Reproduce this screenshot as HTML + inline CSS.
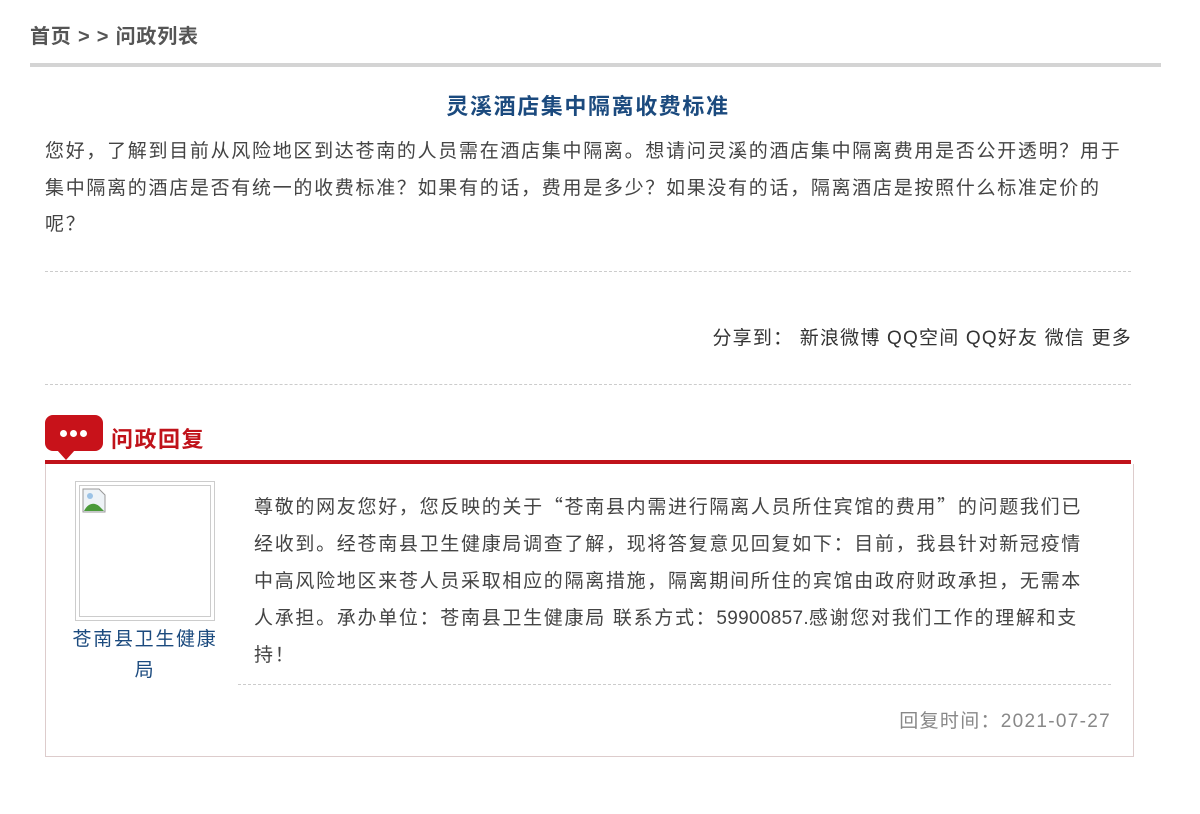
<!DOCTYPE html>
<html><head><meta charset="utf-8"><style>
body{margin:0;background:#fff;font-family:"Liberation Sans","Noto Sans CJK SC",sans-serif;}
.cj{font-family:"Noto Sans CJK SC",sans-serif;}
.crumb{position:absolute;left:30px;top:20px;font-size:20px;font-weight:bold;color:#555;letter-spacing:0.8px;}
.bar{position:absolute;left:30px;top:63px;width:1131px;height:4px;background:#d4d4d4;}
.title{position:absolute;left:0;width:1176px;top:89px;text-align:center;font-size:22px;font-weight:bold;color:#1b4a7e;letter-spacing:1.6px;}
.q{position:absolute;left:45px;top:134px;width:1090px;font-size:19px;letter-spacing:1.7px;line-height:36.5px;color:#444;}
.dash{position:absolute;left:45px;width:1086px;border-top:1px dashed #ccc;}
.share{position:absolute;right:68px;top:323px;font-size:19px;letter-spacing:1.2px;color:#333;}
.icon{position:absolute;left:45px;top:415px;width:58px;height:36px;background:#c8121a;border-radius:8px;}
.icon:after{content:"";position:absolute;left:12px;bottom:-9px;border-left:9px solid transparent;border-right:9px solid transparent;border-top:10px solid #c8121a;}
.dot{position:absolute;top:15px;width:7px;height:7px;border-radius:50%;background:#fff;}
.rh{position:absolute;left:111px;top:422px;font-size:22px;font-weight:bold;color:#c0121a;letter-spacing:1.5px;}
.red{position:absolute;left:45px;top:460px;width:1086px;height:4px;background:#c0121a;}
.box{position:absolute;left:45px;top:464px;width:1089px;height:293px;border:1px solid #dcc;border-top:none;box-sizing:border-box;}
.img{position:absolute;left:75px;top:481px;width:140px;height:140px;border:1px solid #ccc;box-sizing:border-box;}
.img div{position:absolute;left:3px;top:3px;right:3px;bottom:3px;border:1px solid #ccc;}
.org{position:absolute;left:70px;top:624px;width:150px;text-align:center;font-size:19px;letter-spacing:1.7px;line-height:31px;color:#1b4a7e;}
.a{position:absolute;left:254px;top:487px;width:834px;font-size:19px;letter-spacing:1.7px;line-height:37px;color:#444;}
.time{position:absolute;right:89px;top:706px;font-size:19px;letter-spacing:1.3px;color:#888;}
</style></head><body>
<div class="crumb">首页 &gt; &gt; 问政列表</div>
<div class="bar"></div>
<div class="title">灵溪酒店集中隔离收费标准</div>
<div class="q">您好，了解到目前从风险地区到达苍南的人员需在酒店集中隔离。想请问灵溪的酒店集中隔离费用是否公开透明？用于集中隔离的酒店是否有统一的收费标准？如果有的话，费用是多少？如果没有的话，隔离酒店是按照什么标准定价的呢？</div>
<div class="dash" style="top:271px"></div>
<div class="share">分享到： 新浪微博 QQ空间 QQ好友 微信 更多</div>
<div class="dash" style="top:384px"></div>
<div class="icon"><span class="dot" style="left:15px"></span><span class="dot" style="left:25px"></span><span class="dot" style="left:35px"></span></div>
<div class="rh">问政回复</div>
<div class="red"></div>
<div class="box"></div>
<div class="img"><div></div>
<svg style="position:absolute;left:6px;top:6px" width="25" height="25" viewBox="0 0 25 25"><path d="M1 1h16l6 6v17H1z" fill="#eef3f7" stroke="#999"/><path d="M2 23c4-8 10-9 15-5l5 5z" fill="#4a9a3a"/><circle cx="8" cy="8" r="3" fill="#9cc3e6"/></svg></div>
<div class="org">苍南县卫生健康局</div>
<div class="a">尊敬的网友您好，您反映的关于<span class="cj">“</span>苍南县内需进行隔离人员所住宾馆的费用<span class="cj">”</span>的问题我们已经收到。经苍南县卫生健康局调查了解，现将答复意见回复如下：目前，我县针对新冠疫情中高风险地区来苍人员采取相应的隔离措施，隔离期间所住的宾馆由政府财政承担，无需本人承担。承办单位：苍南县卫生健康局 联系方式：<span style="letter-spacing:0.3px">59900857.</span>感谢您对我们工作的理解和支持！</div>
<div class="dash" style="top:684px;left:238px;width:873px"></div>
<div class="time">回复时间：2021-07-27</div>
</body></html>
